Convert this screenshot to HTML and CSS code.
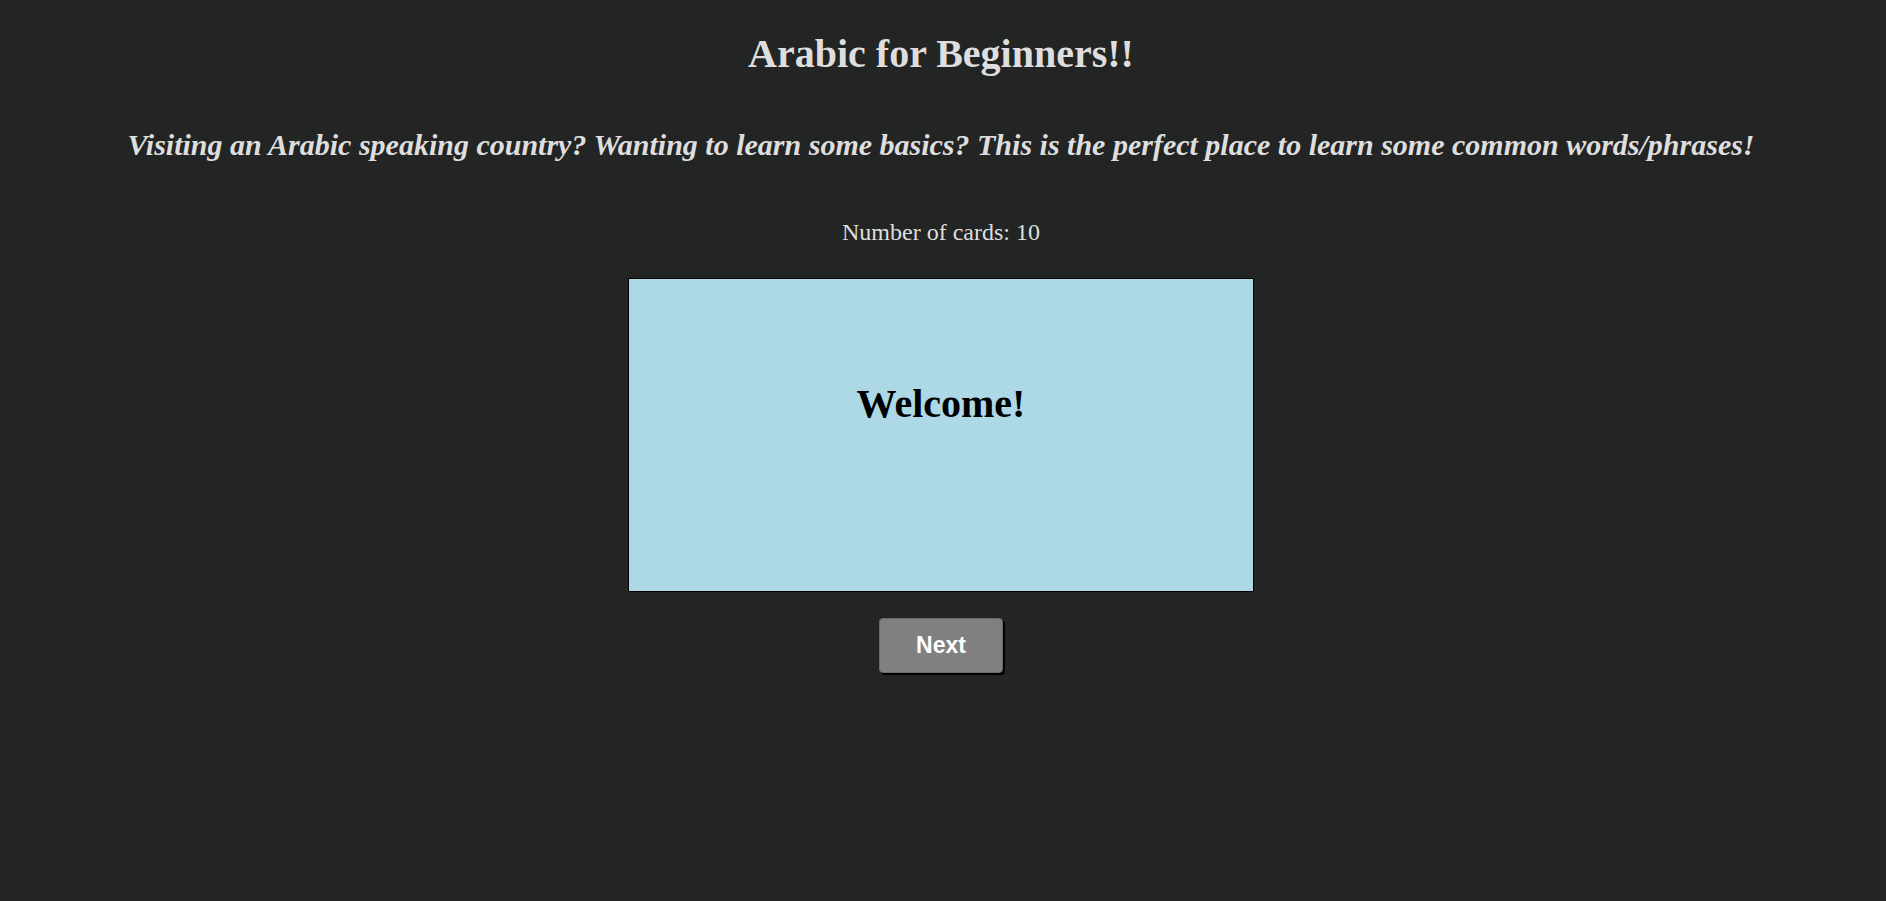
FILE: index.html
```html
<!DOCTYPE html>
<html>
<head>
<meta charset="utf-8">
<title>Arabic for Beginners</title>
<link rel="stylesheet" href="styles.css">
</head>
<body>
<main class="page">
  <h1 class="title">Arabic for Beginners!!</h1>
  <h2 class="intro">Visiting an Arabic speaking country? Wanting to learn some basics? This is the perfect place to learn some common words/phrases!</h2>
  <p class="count">Number of cards: 10</p>
  <div class="card">
    <h3 class="card-text">Welcome!</h3>
  </div>
  <button class="next">Next</button>
</main>
</body>
</html>
```
FILE: styles.css
```css
html, body {
  margin: 0;
  padding: 0;
}
body {
  background: #232525;
  color: #dedede;
  font-family: "Liberation Serif", "Times New Roman", serif;
  height: 901px;
  overflow: hidden;
}
.page {
  display: flex;
  flex-direction: column;
  align-items: center;
  text-align: center;
  padding: 30.5px 4px 0 0;
}
.title {
  margin: 0;
  font-size: 40px;
  line-height: 46px;
  font-weight: bold;
}
.intro {
  margin: 50px 0 0;
  font-size: 30px;
  line-height: 35px;
  font-weight: bold;
  font-style: italic;
}
.count {
  margin: 56.5px 0 0;
  font-size: 24px;
  line-height: 28px;
}
.card {
  margin-top: 32px;
  width: 624px;
  height: 312px;
  background: #add8e6;
  border: 1px solid #000;
  box-sizing: content-box;
}
.card-text {
  margin: 102px 0 0;
  font-size: 40px;
  line-height: 46px;
  font-weight: bold;
  color: #000;
}
.next {
  margin-top: 26px;
  width: 124px;
  height: 55px;
  background: #808080;
  color: #fff;
  border: 1px solid #6a6a6a;
  border-radius: 4px;
  box-shadow: 2px 2px 0 #000;
  font-family: "Liberation Sans", Arial, sans-serif;
  font-weight: bold;
  font-size: 23px;
  padding: 0;
}
```
